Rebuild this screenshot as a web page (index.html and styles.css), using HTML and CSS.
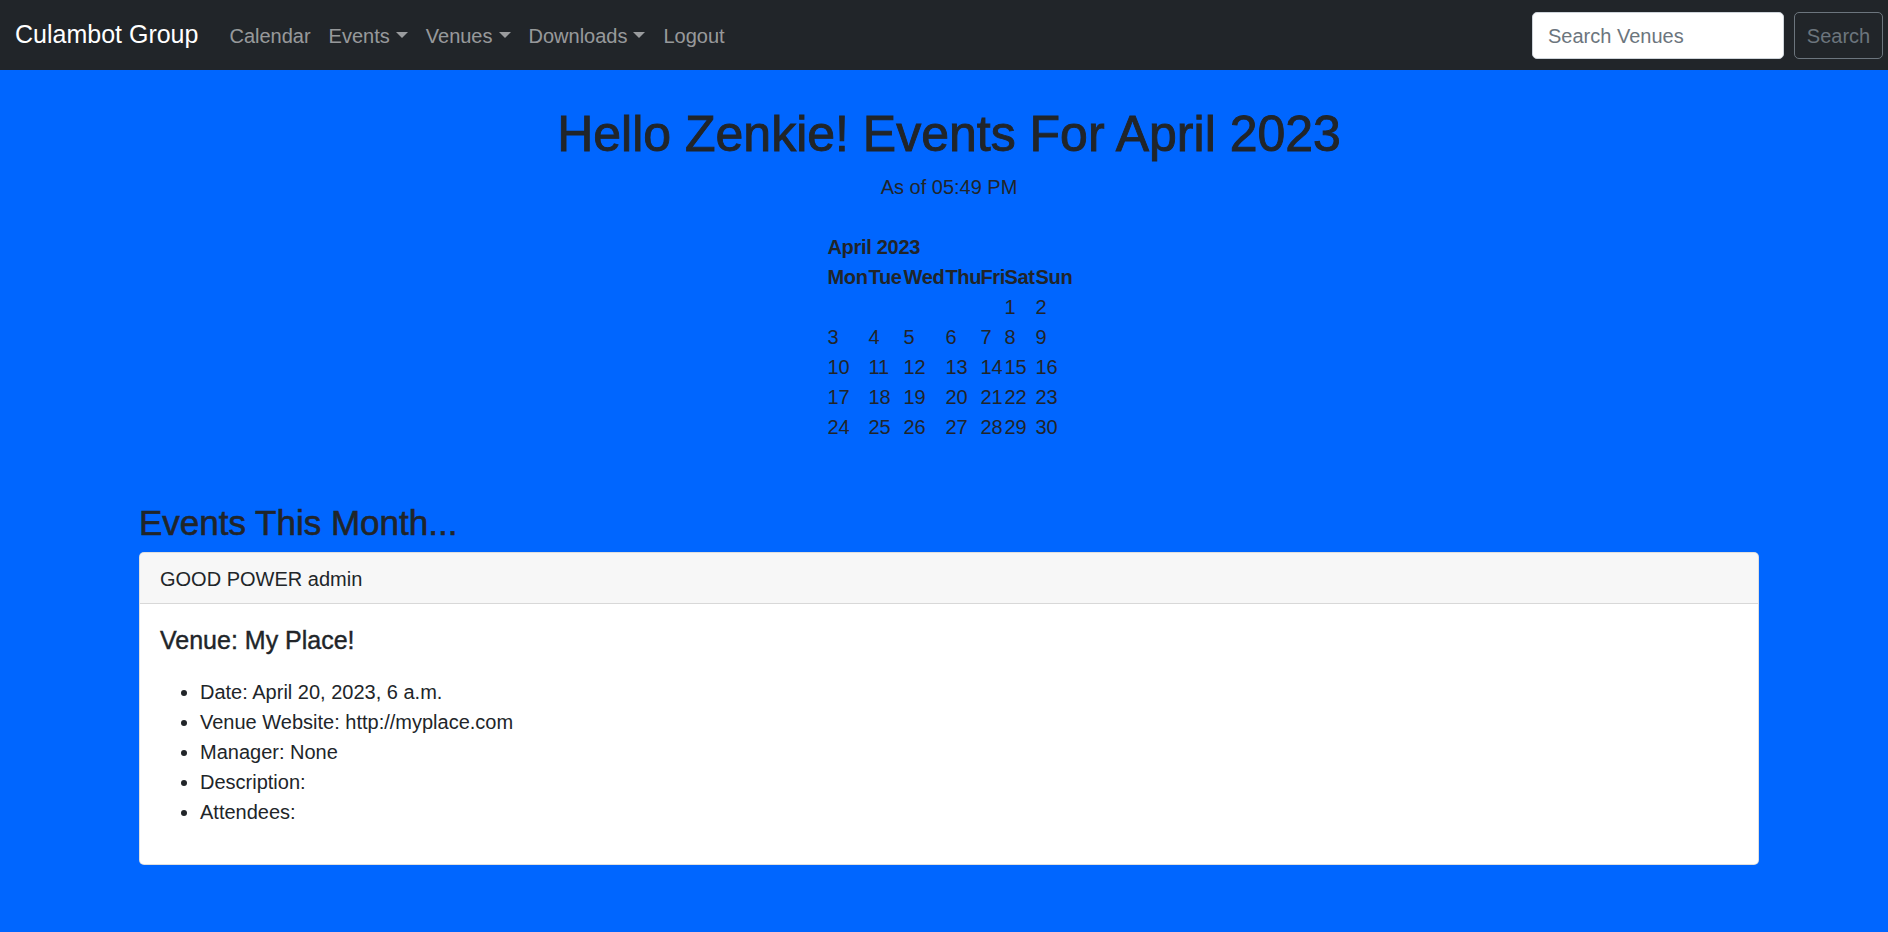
FILE: index.html
```html
<!DOCTYPE html>
<html lang="en">
<head>
<meta charset="utf-8">
<title>Culambot Group</title>
<link rel="stylesheet" href="styles.css">
</head>
<body>
<div class="app">
  <nav class="navbar">
    <div class="nav-left">
      <a class="brand" href="#">Culambot Group</a>
      <ul class="nav-links">
        <li><a class="nav-link" href="#">Calendar</a></li>
        <li><a class="nav-link caret" href="#">Events</a></li>
        <li><a class="nav-link caret" href="#">Venues</a></li>
        <li><a class="nav-link caret" href="#">Downloads</a></li>
        <li><a class="nav-link" href="#">Logout</a></li>
      </ul>
    </div>
    <form class="search-form">
      <input class="search-input" type="search" placeholder="Search Venues">
      <button class="search-btn" type="button">Search</button>
    </form>
  </nav>

  <main class="page">
    <h1 class="title">Hello Zenkie! Events For April 2023</h1>
    <p class="asof">As of 05:49 PM</p>

    <table class="month">
      <colgroup>
        <col class="c-mon"><col class="c-tue"><col class="c-wed"><col class="c-thu"><col class="c-fri"><col class="c-sat"><col class="c-sun">
      </colgroup>
      <tr><th colspan="7" class="month-name">April 2023</th></tr>
      <tr><th>Mon</th><th>Tue</th><th>Wed</th><th>Thu</th><th>Fri</th><th>Sat</th><th>Sun</th></tr>
      <tr><td></td><td></td><td></td><td></td><td></td><td>1</td><td>2</td></tr>
      <tr><td>3</td><td>4</td><td>5</td><td>6</td><td>7</td><td>8</td><td>9</td></tr>
      <tr><td>10</td><td>11</td><td>12</td><td>13</td><td>14</td><td>15</td><td>16</td></tr>
      <tr><td>17</td><td>18</td><td>19</td><td>20</td><td>21</td><td>22</td><td>23</td></tr>
      <tr><td>24</td><td>25</td><td>26</td><td>27</td><td>28</td><td>29</td><td>30</td></tr>
    </table>

    <section class="events">
      <h3 class="events-title">Events This Month...</h3>
      <div class="card">
        <div class="card-header">GOOD POWER admin</div>
        <div class="card-body">
          <h5 class="card-title">Venue: My Place!</h5>
          <ul class="details">
            <li>Date: April 20, 2023, 6 a.m.</li>
            <li>Venue Website: http://myplace.com</li>
            <li>Manager: None</li>
            <li>Description:</li>
            <li>Attendees:</li>
          </ul>
        </div>
      </div>
    </section>
  </main>
</div>
</body>
</html>
```
FILE: styles.css
```css
html, body {
  margin: 0;
  padding: 0;
}
body {
  font-family: "Liberation Sans", Arial, sans-serif;
  font-size: 20px;
  line-height: 1.5;
  color: #212529;
  background: #0066ff;
  overflow: hidden;
  min-height: 932px;
}
*, *::before, *::after { box-sizing: border-box; }

.app {
  width: 1898px;
}

/* Navbar */
.navbar {
  display: flex;
  align-items: center;
  justify-content: space-between;
  height: 70px;
  padding: 10px 15px;
  background: #212529;
}
.nav-left {
  display: flex;
  align-items: center;
}
.brand {
  font-size: 25px;
  line-height: 1.5;
  padding: 6.25px 0;
  margin-right: 22px;
  color: #fff;
  text-decoration: none;
  white-space: nowrap;
}
.nav-links {
  display: flex;
  list-style: none;
  margin: 0;
  padding: 0;
}
.nav-link {
  display: block;
  padding: 11px 9px 9px;
  color: rgba(255, 255, 255, 0.55);
  text-decoration: none;
  white-space: nowrap;
}
.caret::after {
  content: "";
  display: inline-block;
  margin-left: 0.3em;
  vertical-align: 0.255em;
  border-top: 0.3em solid;
  border-right: 0.3em solid transparent;
  border-left: 0.3em solid transparent;
  border-bottom: 0;
}
.search-form {
  display: flex;
  align-items: center;
}
.search-input {
  width: 252px;
  height: 47px;
  padding: 8.5px 15px 6.5px;
  margin-right: 10px;
  font-family: inherit;
  font-size: 20px;
  line-height: 1.5;
  color: #212529;
  background: #fff;
  border: 1px solid #ced4da;
  border-radius: 5px;
  outline: none;
}
.search-input::placeholder {
  color: #6c757d;
}
.search-btn {
  width: 89px;
  height: 47px;
  padding: 8.5px 0 6.5px;
  font-family: inherit;
  font-size: 20px;
  line-height: 1.5;
  color: #6c757d;
  background: transparent;
  border: 1px solid #6c757d;
  border-radius: 5px;
  text-align: center;
}

/* Page */
.page {
  padding-bottom: 66px;
}
.title {
  margin: 34px 0 8px;
  font-size: 50px;
  font-weight: 500;
  line-height: 1.2;
  text-align: center;
  -webkit-text-stroke: 0.9px currentColor;
}
.asof {
  margin: 0;
  text-align: center;
}

.month {
  margin: 30px auto 0;
  border-collapse: collapse;
  border-spacing: 0;
  table-layout: fixed;
  width: 243px;
}
.c-mon { width: 41px; }
.c-tue { width: 35px; }
.c-wed { width: 42px; }
.c-thu { width: 35px; }
.c-fri { width: 24px; }
.c-sat { width: 31px; }
.c-sun { width: 35px; }
.month th,
.month td {
  padding: 0;
  text-align: left;
  line-height: 30px;
  vertical-align: top;
  white-space: nowrap;
}
.month th {
  font-weight: 700;
  letter-spacing: -0.3px;
}

.events {
  width: 1620px;
  margin: 60px auto 0;
}
.events-title {
  margin: 0 0 8px;
  font-size: 35px;
  font-weight: 500;
  line-height: 1.2;
  -webkit-text-stroke: 0.6px currentColor;
}
.card {
  background: #fff;
  border: 1px solid rgba(0, 0, 0, 0.125);
  border-radius: 5px;
  overflow: hidden;
}
.card-header {
  padding: 11px 20px 9px;
  background: rgba(0, 0, 0, 0.03);
  border-bottom: 1px solid rgba(0, 0, 0, 0.125);
}
.card-body {
  padding: 21px 20px 20px;
}
.card-title {
  margin: 0 0 22px;
  font-size: 25px;
  font-weight: 500;
  line-height: 1.2;
  -webkit-text-stroke: 0.4px currentColor;
}
.details {
  margin: 0 0 17px;
  padding-left: 40px;
}
```
